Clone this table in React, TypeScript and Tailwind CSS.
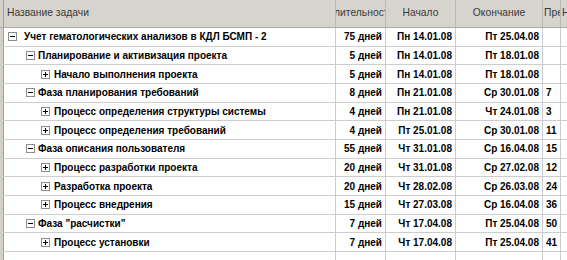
import React from "react";

type Row = {
  level: 0 | 1 | 2;
  open: boolean;
  name: string;
  dur: string;
  start: string;
  end: string;
  pred: string;
};

const rows: Row[] = [
  { level: 0, open: true, name: "Учет гематологических анализов в КДЛ БСМП - 2", dur: "75 дней", start: "Пн 14.01.08", end: "Пт 25.04.08", pred: "" },
  { level: 1, open: true, name: "Планирование и активизация проекта", dur: "5 дней", start: "Пн 14.01.08", end: "Пт 18.01.08", pred: "" },
  { level: 2, open: false, name: "Начало выполнения проекта", dur: "5 дней", start: "Пн 14.01.08", end: "Пт 18.01.08", pred: "" },
  { level: 1, open: true, name: "Фаза планирования требований", dur: "8 дней", start: "Пн 21.01.08", end: "Ср 30.01.08", pred: "7" },
  { level: 2, open: false, name: "Процесс определения структуры системы", dur: "4 дней", start: "Пн 21.01.08", end: "Чт 24.01.08", pred: "3" },
  { level: 2, open: false, name: "Процесс определения требований", dur: "4 дней", start: "Пт 25.01.08", end: "Ср 30.01.08", pred: "11" },
  { level: 1, open: true, name: "Фаза описания пользователя", dur: "55 дней", start: "Чт 31.01.08", end: "Ср 16.04.08", pred: "15" },
  { level: 2, open: false, name: "Процесс разработки проекта", dur: "20 дней", start: "Чт 31.01.08", end: "Ср 27.02.08", pred: "12" },
  { level: 2, open: false, name: "Разработка проекта", dur: "20 дней", start: "Чт 28.02.08", end: "Ср 26.03.08", pred: "24" },
  { level: 2, open: false, name: "Процесс внедрения", dur: "15 дней", start: "Чт 27.03.08", end: "Ср 16.04.08", pred: "36" },
  { level: 1, open: true, name: 'Фаза "расчистки"', dur: "7 дней", start: "Чт 17.04.08", end: "Пт 25.04.08", pred: "50" },
  { level: 2, open: false, name: "Процесс установки", dur: "7 дней", start: "Чт 17.04.08", end: "Пт 25.04.08", pred: "41" },
];

const boxPad: Record<number, string> = { 0: "pl-[4px]", 1: "pl-[22px]", 2: "pl-[37px]" };
const textGap: Record<number, string> = { 0: "ml-[7px]", 1: "ml-[3px]", 2: "ml-[4px]" };

function Toggle({ open }: { open: boolean }) {
  return (
    <span className="relative inline-block w-[9px] h-[9px] border border-[#8c8c8c] bg-white shrink-0">
      <span className="absolute left-[1px] top-[3px] w-[5px] h-[1px] bg-black" />
      {!open && <span className="absolute left-[3px] top-[1px] w-[1px] h-[5px] bg-black" />}
    </span>
  );
}

export default function App() {
  const cellBorder = "border-r border-[#c9ced6]";
  return (
    <div
      className="w-[567px] h-[260px] overflow-hidden bg-white text-[10px] text-black"
      style={{ fontFamily: '"Liberation Sans", Arial, sans-serif' }}
    >
      {/* header */}
      <div className="flex h-[28px] bg-[#d7d4ce] border-b border-[#a9a9a9] text-[#3a3a3a] text-[10.3px]">
        <div className="w-[4px] shrink-0 border-r border-[#a0a0a0] bg-[#d4d0c8]" />
        <div className="w-[332px] shrink-0 border-r border-[#b8b8b8] pl-[3px] pt-[5px]">Название задачи</div>
        <div className="w-[50px] shrink-0 border-r border-[#b8b8b8] overflow-hidden flex justify-center pt-[5px] whitespace-nowrap">
          Длительность
        </div>
        <div className="w-[70px] shrink-0 border-r border-[#b8b8b8] flex justify-center pt-[5px]">Начало</div>
        <div className="w-[87px] shrink-0 border-r border-[#b8b8b8] flex justify-center pt-[5px]">Окончание</div>
        <div className="w-[18px] shrink-0 border-r border-[#b8b8b8] overflow-hidden whitespace-nowrap pl-[1px] pt-[5px]">Пред</div>
        <div className="flex-1 overflow-hidden whitespace-nowrap pl-[1px] pt-[5px]">Н</div>
      </div>
      {rows.map((r, i) => (
        <div key={i} className="flex h-[18.67px] border-b border-[#cdcdcd] font-bold items-stretch">
          <div className="w-[4px] shrink-0 border-r border-[#a0a0a0] bg-[#d4d0c8]" />
          <div className={`w-[332px] shrink-0 ${cellBorder} flex items-center ${boxPad[r.level]} whitespace-nowrap overflow-hidden`}>
            <Toggle open={r.open} />
            <span className={textGap[r.level]}>{r.name}</span>
          </div>
          <div className={`w-[50px] shrink-0 ${cellBorder} flex items-center justify-end pr-[3px] whitespace-nowrap`}>{r.dur}</div>
          <div className={`w-[70px] shrink-0 ${cellBorder} flex items-center justify-end pr-[3px] whitespace-nowrap`}>{r.start}</div>
          <div className={`w-[87px] shrink-0 ${cellBorder} flex items-center justify-end pr-[3px] whitespace-nowrap`}>{r.end}</div>
          <div className={`w-[18px] shrink-0 ${cellBorder} flex items-center pl-[3px] whitespace-nowrap overflow-hidden`}>{r.pred}</div>
          <div className="flex-1" />
        </div>
      ))}
      <div className="flex h-[18.67px] border-b border-[#cdcdcd]">
        <div className="w-[4px] shrink-0 border-r border-[#a0a0a0] bg-[#d4d0c8]" />
        <div className={`w-[332px] shrink-0 ${cellBorder}`} />
        <div className={`w-[50px] shrink-0 ${cellBorder}`} />
        <div className={`w-[70px] shrink-0 ${cellBorder}`} />
        <div className={`w-[87px] shrink-0 ${cellBorder}`} />
        <div className={`w-[18px] shrink-0 ${cellBorder}`} />
        <div className="flex-1" />
      </div>
    </div>
  );
}
